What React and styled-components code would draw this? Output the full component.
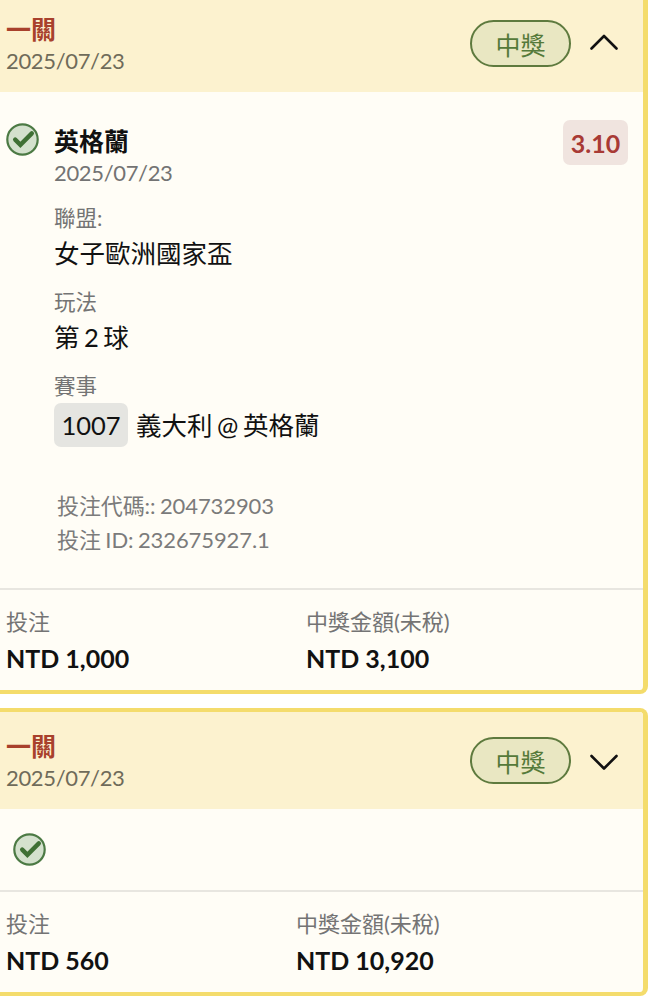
import React from "react";
import styled, { createGlobalStyle } from "styled-components";

const Global = createGlobalStyle`
  html, body { margin: 0; padding: 0; background: #fff; }
  body { font-family: Lato, "Noto Sans CJK TC", sans-serif; width: 648px; height: 1000px; overflow: hidden; }
`;
const Page = styled.div`display:flex;flex-direction:column;gap:14px;margin-top:-9px;`;
const Card = styled.section`
  border: 4px solid #f4dc6c; border-right-width: 5px; border-left: 0; border-radius: 0 8px 8px 0; background: #fffdf6; overflow: hidden;
`;
const Header = styled.div`
  height: 97px; background: #fcf2cf; display:flex; align-items:center; justify-content:space-between;
  padding: 0 25px 0 6px; box-sizing: border-box;
`;
const TitleBlock = styled.div`margin-top:2px;`;
const Title = styled.div`font-size:25px;line-height:32px;font-weight:700;color:#a8412c;margin-bottom:1px;`;
const DateText = styled.div`font-size:22px;line-height:30px;letter-spacing:-0.35px;color:${p => p.$head ? "#6f6b5a" : "#737373"};`;
const HeaderRight = styled.div`display:flex;align-items:center;gap:19px;`;
const Status = styled.div`width:101px;height:47px;box-sizing:border-box;border:2px solid #5e7a3e;border-radius:24px;background:#e9e7c2;color:#557a3a;font-size:25px;display:flex;align-items:center;justify-content:center;`;
const Body = styled.div`padding:28px 15px 0 6px;height:496px;box-sizing:border-box;`;
const Row = styled.div`display:flex;align-items:flex-start;gap:15px;`;
const CheckSlot = styled.div`margin-top:3px;display:flex;`;
const Main = styled.div`flex:1;`;
const Name = styled.div`font-size:25px;line-height:34px;font-weight:700;color:#111;margin-top:4px;`;
const Label = styled.div`font-size:21.5px;line-height:28px;color:#747474;margin-top:${p => p.$mt}px;`;
const Value = styled.div`font-size:25.5px;line-height:42px;color:#111;word-spacing:-2px;`;
const Odds = styled.div`width:65px;height:45px;justify-content:center;background:#f0e4df;border-radius:7px;color:#a83a35;font-weight:700;font-size:25px;display:flex;align-items:center;`;
const Event = styled.div`display:flex;align-items:center;gap:8px;font-size:25.5px;color:#111;margin-top:3px;word-spacing:-2px;`;
const Code = styled.span`height:44px;width:74px;justify-content:center;background:#e5e5e1;border-radius:7px;display:flex;align-items:center;`;
const EventName = styled.span`margin-bottom:3px;`;
const Ids = styled.div`margin:42px 0 0 51px;font-size:22px;line-height:34px;letter-spacing:-0.1px;word-spacing:-1px;color:#7b7b7b;`;
const Footer = styled.div`border-top:2px solid #e8e6e0;display:grid;grid-template-columns:${p => p.$c} 1fr;padding:15px 0 0 6px;height:102px;box-sizing:border-box;`;
const FLabel = styled.div`font-size:22px;line-height:34px;color:#747474;`;
const FValue = styled.div`font-size:25px;line-height:38px;font-weight:700;color:#111;`;
const Simple = styled.div`height:81px;padding-left:13px;display:flex;align-items:center;`;

const Check = () => (
  <svg width="33" height="33" viewBox="0 0 33 33" fill="none"><circle cx="16.5" cy="16.5" r="15.2" fill="#d4e1cd" stroke="#4c7a44" strokeWidth="2.2"/><path d="M9.2 16.6l5.2 5.2L25.8 10.4" stroke="#3f7034" strokeWidth="4.4" strokeLinecap="round"/></svg>
);
const Chevron = ({ up }) => (
  <svg width="28" height="22" viewBox="0 0 28 22" fill="none"><path d={up ? "M1.5 15.5L14 3l12.5 12.5" : "M1.5 6L14 18.5 26.5 6"} stroke="#111" strokeWidth="2.6" strokeLinecap="round" strokeLinejoin="round"/></svg>
);
const Head = ({ up }) => (
  <Header>
    <TitleBlock><Title>一關</Title><DateText $head>2025/07/23</DateText></TitleBlock>
    <HeaderRight><Status>中獎</Status><Chevron up={up}/></HeaderRight>
  </Header>
);
const Foot = ({ c, a, b }) => (
  <Footer $c={c}>
    <div><FLabel>投注</FLabel><FValue>NTD {a}</FValue></div>
    <div><FLabel>中獎金額(未稅)</FLabel><FValue>NTD {b}</FValue></div>
  </Footer>
);
export default function App() {
  return (
    <Page>
      <Global />
      <Card>
        <Head up />
        <Body>
          <Row>
            <CheckSlot><Check /></CheckSlot>
            <Main>
              <Name>英格蘭</Name>
              <DateText>2025/07/23</DateText>
              <Label $mt={16}>聯盟:</Label><Value>女子歐洲國家盃</Value>
              <Label $mt={14}>玩法</Label><Value>第 2 球</Value>
              <Label $mt={14}>賽事</Label>
              <Event><Code>1007</Code><EventName>義大利 @ 英格蘭</EventName></Event>
            </Main>
            <Odds>3.10</Odds>
          </Row>
          <Ids>投注代碼:: 204732903<br />投注 ID: 232675927.1</Ids>
        </Body>
        <Foot c="300px" a="1,000" b="3,100" />
      </Card>
      <Card>
        <Head />
        <Simple><Check /></Simple>
        <Foot c="290px" a="560" b="10,920" />
      </Card>
    </Page>
  );
}
